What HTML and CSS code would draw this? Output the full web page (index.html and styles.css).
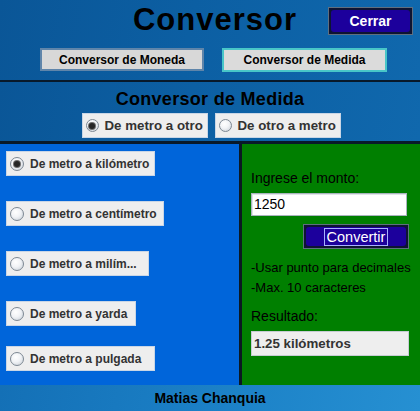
FILE: index.html
```html
<!DOCTYPE html>
<html lang="es">
<head>
<meta charset="utf-8">
<title>Conversor</title>
<link rel="stylesheet" href="styles.css">
</head>
<body>
<div class="app">
  <header class="top">
    <div class="title-row">
      <span class="spacer"></span>
      <h1 class="title">Conversor</h1>
      <button class="btn-dark btn-close"><span class="btn-face">Cerrar</span></button>
    </div>
    <div class="tabs">
      <button class="tab">Conversor de Moneda</button>
      <button class="tab tab-active">Conversor de Medida</button>
    </div>
  </header>

  <section class="mode">
    <h2 class="mode-title">Conversor de Medida</h2>
    <div class="mode-options">
      <label class="radio radio-lg checked"><span class="circle"></span><span class="radio-text">De metro a otro</span></label>
      <label class="radio radio-lg"><span class="circle"></span><span class="radio-text">De otro a metro</span></label>
    </div>
  </section>

  <main class="panels">
    <div class="left">
      <label class="radio item item-1 checked"><span class="circle"></span><span class="radio-text">De metro a kilómetro</span></label>
      <label class="radio item item-2"><span class="circle"></span><span class="radio-text">De metro a centímetro</span></label>
      <label class="radio item item-3"><span class="circle"></span><span class="radio-text">De metro a milím...</span></label>
      <label class="radio item item-4"><span class="circle"></span><span class="radio-text">De metro a yarda</span></label>
      <label class="radio item item-5"><span class="circle"></span><span class="radio-text">De metro a pulgada</span></label>
    </div>
    <div class="right">
      <div class="label label-amount">Ingrese el monto:</div>
      <div class="field">1250</div>
      <div class="btn-row">
        <button class="btn-dark btn-convert"><span class="btn-face"><span class="focus">Convertir</span></span></button>
      </div>
      <div class="hints">
        <div class="hint">-Usar punto para decimales</div>
        <div class="hint">-Max. 10 caracteres</div>
      </div>
      <div class="label label-result">Resultado:</div>
      <div class="result">1.25 kilómetros</div>
    </div>
  </main>

  <footer class="footer">Matias Chanquia</footer>
</div>
</body>
</html>
```

FILE: styles.css
```css
* {
  box-sizing: border-box;
}

html, body {
  margin: 0;
  padding: 0;
}

body {
  width: 420px;
  height: 411px;
  overflow: hidden;
  font-family: "Liberation Sans", Arial, sans-serif;
  background: #0b5c9e;
}

.app {
  width: 420px;
  height: 411px;
  display: flex;
  flex-direction: column;
}

/* ---------- header ---------- */
.top {
  height: 82px;
  padding-top: 2px;
  background: linear-gradient(100deg, #0a5697 0%, #0c5fa3 45%, #1068ad 100%);
  border-bottom: 2px solid #08192a;
}

.title-row {
  height: 36px;
  display: grid;
  grid-template-columns: 1fr auto 1fr;
  align-items: center;
}

.title {
  margin: 0;
  padding-left: 10px;
  font-size: 31px;
  line-height: 36px;
  font-weight: 700;
  letter-spacing: 1px;
  color: #000;
}

.btn-dark {
  font-family: inherit;
  padding: 2px;
  margin: 0;
  border: 1px solid #5f6f80;
  background: #0d1433;
  cursor: pointer;
  display: flex;
}

.btn-face {
  flex: 1;
  display: flex;
  align-items: center;
  justify-content: center;
  background: #1c009c;
  border-radius: 3px;
  color: #fff;
}

.btn-close {
  justify-self: end;
  margin-right: 7px;
  margin-top: 2px;
  width: 85px;
  height: 28px;
}

.btn-close .btn-face {
  font-size: 14px;
  font-weight: 700;
}

.tabs {
  margin-top: 10px;
  padding-left: 40px;
  display: flex;
  gap: 18px;
}

.tab {
  font-family: inherit;
  font-size: 12px;
  font-weight: 700;
  color: #000;
  margin: 0;
  padding: 0;
  width: 164px;
  height: 23px;
  background: #d8d8d8;
  border: 2px solid #5f85aa;
}

.tab-active {
  width: 165px;
  height: 24px;
  background: #dbdbdb;
  border-color: #48c6c8;
}

/* ---------- mode section ---------- */
.mode {
  height: 62px;
  padding-top: 6px;
  background: linear-gradient(100deg, #0a5697 0%, #0c5fa3 45%, #1068ad 100%);
  border-bottom: 3px solid #08192a;
}

.mode-title {
  margin: 0;
  text-align: center;
  font-size: 18px;
  line-height: 22px;
  font-weight: 700;
  letter-spacing: 0.3px;
  color: #000;
}

.mode-options {
  margin-top: 3px;
  display: flex;
  justify-content: center;
  gap: 7px;
  padding-left: 2px;
}

/* ---------- radios ---------- */
.radio {
  display: flex;
  align-items: center;
  height: 25px;
  background: #eeeeee;
  border: 1px solid #c9d6e6;
  padding-left: 3px;
  color: #333;
  font-weight: 700;
  white-space: nowrap;
  overflow: hidden;
}

.radio-lg {
  width: 126px;
  font-size: 13.3px;
  gap: 6px;
}

.circle {
  flex: none;
  width: 14px;
  height: 14px;
  border-radius: 50%;
  border: 1px solid #7d8893;
  background: radial-gradient(circle at 40% 35%, #ffffff 0%, #f1f3f6 45%, #c5ccd4 100%);
  display: flex;
  align-items: center;
  justify-content: center;
}

.radio-lg .circle {
  width: 13px;
  height: 13px;
}

.checked .circle::after {
  content: "";
  width: 6px;
  height: 6px;
  border-radius: 50%;
  background: #262626;
  box-shadow: 0 0 0 1px #6d6d6d;
}

/* ---------- panels ---------- */
.panels {
  flex: none;
  height: 241px;
  display: flex;
}

.left {
  flex: none;
  width: 242px;
  background: #0065da;
  padding: 7px 0 0 6px;
  display: flex;
  flex-direction: column;
  align-items: flex-start;
  gap: 25px;
  border-right: 3px solid #0b1822;
}

.item {
  font-size: 12px;
  gap: 6px;
}

.item-1 { width: 149px; }
.item-2 { width: 158px; }
.item-3 { width: 143px; }
.item-4 { width: 130px; }
.item-5 { width: 149px; margin-top: -5px; }

.right {
  flex: none;
  width: 178px;
  background: #007f00;
  padding: 26px 0 0 9px;
  color: #000;
  white-space: nowrap;
}

.label {
  font-size: 14px;
  line-height: 16px;
}

.field {
  margin-top: 7px;
  width: 156px;
  height: 23px;
  background: #fff;
  border: 1px solid #aab4be;
  box-shadow: inset 1px 1px 0 #e0e4e8;
  font-size: 14px;
  line-height: 21px;
  padding-left: 2px;
  color: #000;
}

.btn-row {
  margin-top: 8px;
  padding-right: 11px;
  display: flex;
  justify-content: flex-end;
}

.btn-convert {
  width: 106px;
  height: 25px;
}

.btn-convert .btn-face {
  font-size: 14.5px;
}

.focus {
  border: 1px solid #a7b0ff;
  padding: 0 2px;
  line-height: 16px;
}

.hints {
  margin-top: 9px;
}

.hint {
  font-size: 13px;
  line-height: 20px;
}

.label-result {
  margin-top: 10px;
}

.result {
  margin-top: 7px;
  width: 158px;
  height: 25px;
  background: #eeeeee;
  border: 1px solid #c6ccd2;
  padding-left: 2px;
  display: flex;
  align-items: center;
  font-size: 13.3px;
  font-weight: 700;
  color: #333;
}

/* ---------- footer ---------- */
.footer {
  flex: 1;
  background: linear-gradient(100deg, #1470b6 0%, #1b80c6 50%, #2690d2 100%);
  text-align: center;
  font-size: 14px;
  font-weight: 700;
  line-height: 26px;
  color: #000;
}
```
